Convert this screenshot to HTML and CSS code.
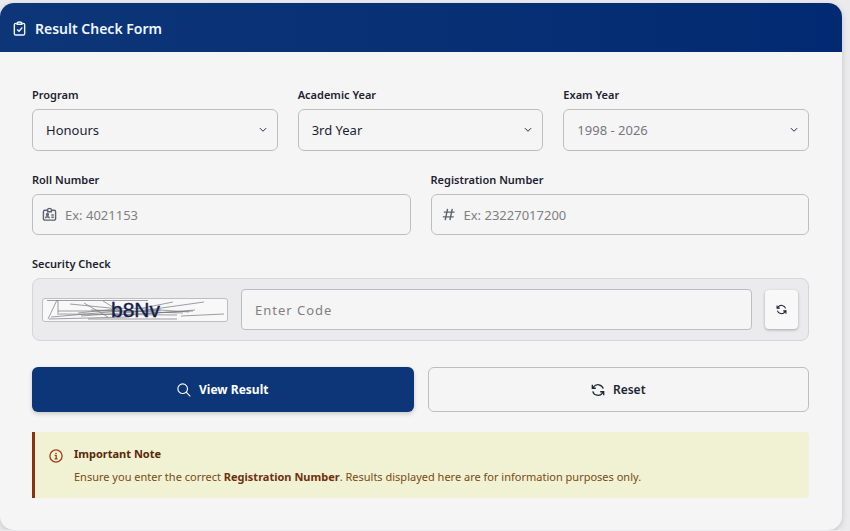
FILE: index.html
```html
<!DOCTYPE html>
<html lang="en">
<head>
    <meta charset="UTF-8">
    <meta name="viewport" content="width=device-width, initial-scale=1.0">
    <title>Result Check Form</title>
    <link rel="stylesheet" href="styles.css">
</head>
<body>
<main class="card">
    <header class="card-header">
        <svg class="header-icon" viewBox="0 0 16 16" aria-hidden="true">
            <path d="M5 2.500H4A1.500 1.500 0 0 0 2.500 4v9.500A1.500 1.500 0 0 0 4 15h8a1.500 1.500 0 0 0 1.500-1.500V4A1.500 1.500 0 0 0 12 2.500h-1"/>
            <path d="M5.500 2.500C5.500 1.500 6.500 1 8 1s2.500.5 2.500 1.500v1h-5z"/>
            <path d="m5.500 9 2 2 3.500-4"/>
        </svg>
        <h1>Result Check Form</h1>
    </header>
    <form class="card-body">
        <div class="row row-three">
            <div class="field">
                <label for="program">Program</label>
                <div class="select-wrap">
                    <select id="program"><option>Honours</option></select>
                    <svg class="chevron" viewBox="0 0 16 16" aria-hidden="true"><path d="m3 5 5 5 5-5"/></svg>
                </div>
            </div>
            <div class="field">
                <label for="academicYear">Academic Year</label>
                <div class="select-wrap">
                    <select id="academicYear"><option>3rd Year</option></select>
                    <svg class="chevron" viewBox="0 0 16 16" aria-hidden="true"><path d="m3 5 5 5 5-5"/></svg>
                </div>
            </div>
            <div class="field">
                <label for="examYear">Exam Year</label>
                <div class="select-wrap">
                    <select id="examYear" class="is-empty"><option value="">1998 - 2026</option></select>
                    <svg class="chevron" viewBox="0 0 16 16" aria-hidden="true"><path d="m3 5 5 5 5-5"/></svg>
                </div>
            </div>
        </div>
        <div class="row row-two">
            <div class="field">
                <label for="roll">Roll Number</label>
                <div class="input-group">
                    <svg viewBox="0 0 16 16" aria-hidden="true">
                        <path d="M6 3.500H3A1.500 1.500 0 0 0 1.500 5v7.500A1.500 1.500 0 0 0 3 14h10a1.500 1.500 0 0 0 1.500-1.500V5A1.500 1.500 0 0 0 13 3.500h-3"/>
                        <path d="M6 5V3a2 1.500 0 0 1 4 0v2zM10 8.500h2.500M10 11h2.500M3.800 12c0-2.200 4-2.200 4 0"/>
                        <circle cx="5.800" cy="8" r="1"/>
                    </svg>
                    <input id="roll" type="text" placeholder="Ex: 4021153">
                </div>
            </div>
            <div class="field">
                <label for="registration">Registration Number</label>
                <div class="input-group">
                    <svg viewBox="0 0 16 16" aria-hidden="true"><path d="M7 2 4.500 14M12 2 9.500 14M3 5.500h11.500M2 10.500h11.500"/></svg>
                    <input id="registration" type="text" placeholder="Ex: 23227017200">
                </div>
            </div>
        </div>
        <div class="field">
            <label for="captcha">Security Check</label>
            <div class="captcha-box">
                <svg class="captcha-image" viewBox="0 0 184 22" role="img" aria-label="Captcha">
                    <g class="noise">
                        <path d="M4 1.500h101M5 20 14 1M15 1v13M27 5l50 5M41 4l24 14M60 2l18 11M8 18l70-6M15 12h100M6 20l78-2M38 17l80-6M45 20h89M48 11l92 3M90 13l71-10M95 10l35-7M88 9l58 4M100 15l52-4M138 17l43-2M70 16l80-4M35 14l48-5M14 15l120 1"/>
                    </g>
                    <text x="68" y="18">b8Nv</text>
                </svg>
                <input id="captcha" type="text" placeholder="Enter Code">
                <button type="button" class="refresh-btn" aria-label="Refresh code">
                    <svg viewBox="0 0 16 16" aria-hidden="true">
                        <path d="M14 6.500A6.200 6.200 0 0 0 3 4.500L1.500 6M2 9.500a6.200 6.200 0 0 0 11 2l1.500-1.500M1.500 2v4h4M14.500 14v-4h-4"/>
                    </svg>
                </button>
            </div>
        </div>
        <div class="actions">
            <button type="submit" class="btn btn-primary">
                <svg viewBox="0 0 16 16" aria-hidden="true"><circle cx="6.500" cy="6.500" r="5.500"/><path d="m10.500 10.500 4.700 4.700"/></svg>
                View Result
            </button>
            <button type="reset" class="btn btn-outline">
                <svg viewBox="0 0 16 16" aria-hidden="true">
                    <path d="M14 6.500A6.200 6.200 0 0 0 3 4.500L1.500 6M2 9.500a6.200 6.200 0 0 0 11 2l1.500-1.500M1.500 2v4h4M14.500 14v-4h-4"/>
                </svg>
                Reset
            </button>
        </div>
        <div class="note">
            <svg viewBox="0 0 16 16" aria-hidden="true"><circle cx="8" cy="8" r="7"/><path d="M6.500 7.300h1.700v4M6.500 11.300h3.300M8 4.300v1.400"/></svg>
            <div>
                <h2>Important Note</h2>
                <p>Ensure you enter the correct <strong>Registration Number</strong>. Results displayed here are for information purposes only.</p>
            </div>
        </div>
    </form>
</main>
</body>
</html>
```
FILE: styles.css
```css
* {
    box-sizing: border-box;
}
body {
    margin: 0;
    padding: 3px 8px 0 0;
    background: #ebebee;
    color: #1e1e32;
    font-family: 'Noto Sans', sans-serif;
    font-size: 13px;
}
.card {
    background: #f5f5f5;
    border-radius: 14px;
    overflow: hidden;
    box-shadow: 0 2px 6px rgba(0, 0, 0, 0.16);
}
.card-header {
    display: flex;
    align-items: center;
    gap: 8px;
    padding: 13px 12px 11px;
    background: linear-gradient(90deg, #0d3678, #022a72);
    color: #eef6ff;
}
.card-header h1 {
    margin: 0;
    font-size: 14px;
    line-height: 25px;
    font-weight: 600;
}
svg {
    flex: none;
    fill: none;
    stroke: currentColor;
    stroke-width: 1.5;
}
.header-icon {
    width: 15px;
    height: 15px;
}
.card-body {
    display: flex;
    flex-direction: column;
    gap: 20px;
    padding: 34px 33px 32px 32px;
}
.row {
    display: grid;
    gap: 20px;
}
.row-three {
    grid-template-columns: repeat(3, 1fr);
}
.row-two {
    grid-template-columns: repeat(2, 1fr);
}
label {
    display: block;
    margin-bottom: 6px;
    font-size: 11px;
    line-height: 17px;
    font-weight: 600;
}
.select-wrap {
    position: relative;
}
select, input {
    display: block;
    width: 100%;
    height: 41px;
    padding: 0 13px;
    border: 1px solid #bcbec2;
    border-radius: 6px;
    background: #f5f5f5;
    color: #1e1e32;
    font: inherit;
    appearance: none;
}
select {
    height: 42px;
}
.is-empty {
    color: #77777d;
}
.chevron {
    position: absolute;
    right: 10px;
    top: 16px;
    width: 10px;
    height: 10px;
    pointer-events: none;
}
input::placeholder {
    color: #808080;
    opacity: 1;
}
.input-group {
    display: flex;
    align-items: center;
    gap: 8px;
    padding-left: 9px;
    border: 1px solid #bcbec2;
    border-radius: 6px;
    color: #5c6270;
}
.input-group svg {
    width: 15px;
    height: 15px;
}
.input-group input {
    height: 39px;
    padding: 0;
    border: none;
}
.captcha-box {
    display: flex;
    align-items: center;
    gap: 13px;
    padding: 10px;
    padding-left: 9px;
    background: #ebebed;
    border: 1px solid #d5d5d7;
    border-radius: 8px;
}
.captcha-image {
    width: 186px;
    height: 24px;
    border: 1px solid #bcbec2;
    border-radius: 3px;
    background: #f8f8f8;
}
.captcha-image text {
    font-family: 'Liberation Sans', sans-serif;
    font-size: 21px;
    fill: #141e50;
    stroke: #141e50;
    stroke-width: 0.4;
}
.noise {
    stroke: #77777d;
    stroke-width: 0.7;
}
.captcha-box input {
    flex: 1;
    min-width: 0;
    border-radius: 4px;
    letter-spacing: 1px;
}
.refresh-btn {
    display: flex;
    align-items: center;
    justify-content: center;
    width: 33px;
    height: 39px;
    padding: 0;
    border: none;
    border-radius: 4px;
    background: #f8f8f8;
    color: #1e1e32;
    box-shadow: 0 1px 3px rgba(0, 0, 0, 0.3);
    cursor: pointer;
}
.refresh-btn svg {
    width: 11px;
    height: 11px;
}
.actions {
    display: grid;
    grid-template-columns: repeat(2, 1fr);
    gap: 14px;
    margin-top: 6px;
}
.btn {
    display: flex;
    align-items: center;
    justify-content: center;
    gap: 8px;
    height: 45px;
    border: none;
    border-radius: 6px;
    font: inherit;
    font-size: 12px;
    font-weight: 600;
    cursor: pointer;
}
.btn svg {
    width: 14px;
    height: 14px;
}
.btn-primary {
    background: #0d3678;
    color: #fff;
    font-weight: 700;
    box-shadow: 0 2px 4px rgba(0, 0, 0, 0.18);
}
.btn-primary svg {
    stroke-width: 1.3;
}
.btn-outline {
    border: 1px solid #bcbec2;
    background: #f5f5f5;
    color: #1e2632;
}
.note {
    display: flex;
    gap: 11px;
    padding: 12px 14px;
    background: #f1f1d3;
    border-left: 3px solid #8a3210;
    border-radius: 0 4px 4px 0;
    color: #7a4a12;
    font-size: 11px;
}
.note svg {
    width: 14px;
    height: 14px;
    margin-top: 5px;
    color: #a03c18;
}
.note h2 {
    margin: 0 0 4px;
    color: #5a2808;
    font-size: 11px;
    line-height: 20px;
    font-weight: 700;
}
.note p {
    margin: 0;
    line-height: 18px;
}
.note strong {
    color: #6e300c;
}
@media (max-width: 600px) {
    .row-three, .row-two, .actions { grid-template-columns: 1fr; }
    .captcha-box { flex-wrap: wrap; }
}
```
